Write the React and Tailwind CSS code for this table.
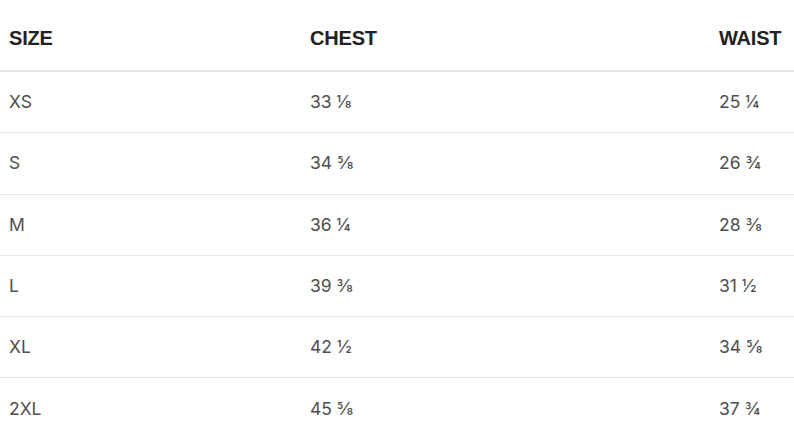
import React from "react";

const rows = [
  ["XS", "33 ⅛", "25 ¼"],
  ["S", "34 ⅝", "26 ¾"],
  ["M", "36 ¼", "28 ⅜"],
  ["L", "39 ⅜", "31 ½"],
  ["XL", "42 ½", "34 ⅝"],
  ["2XL", "45 ⅝", "37 ¾"],
];

export default function App() {
  return (
    <div className="w-[794px] h-[438px] overflow-hidden bg-white">
      <div className="grid grid-cols-[310px_409px_75px] h-[72px] pt-[5px] items-center border-b-2 border-[#e2e2e2] font-['Liberation_Sans',Arial,sans-serif] font-bold text-[20px] text-[#222222] tracking-[-0.2px]">
        <div className="pl-[9px]">SIZE</div>
        <div>CHEST</div>
        <div>WAIST</div>
      </div>
      {rows.map((r, i) => (
        <div
          key={i}
          className="grid grid-cols-[310px_409px_75px] h-[61.3px] items-center border-b border-[#e6e6e6] font-['Inter',sans-serif] text-[17.5px] text-[#4f4f4f]"
        >
          <div className="pl-[9px]">{r[0]}</div>
          <div>{r[1]}</div>
          <div>{r[2]}</div>
        </div>
      ))}
    </div>
  );
}
